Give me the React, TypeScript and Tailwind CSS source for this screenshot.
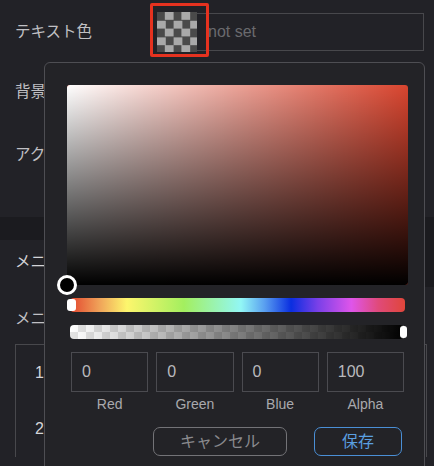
const font = "font-['Liberation_Sans','Noto_Sans_CJK_JP',sans-serif]";

const channels = [
  { label: "Red", value: "0" },
  { label: "Green", value: "0" },
  { label: "Blue", value: "0" },
  { label: "Alpha", value: "100" },
];

function ColorPopover() {
  return (
    <div className="absolute left-[44px] top-[62px] w-[381px] h-[420px] rounded-[6px] border border-[#4e4e53] bg-[#232327] pl-[22px] pr-[16px] pt-[22px]">
      {/* Saturation / value area */}
      <div className="relative h-[200px] rounded-[3px] bg-[#d9452f]">
        <div className="absolute inset-0 rounded-[3px] bg-[linear-gradient(to_right,#ffffff,rgba(255,255,255,0))]" />
        <div className="absolute inset-0 rounded-[3px] bg-[linear-gradient(to_top,#000000,rgba(0,0,0,0))]" />
        <div className="absolute left-[-10px] bottom-[-10px] w-[20px] h-[20px] rounded-full border-[3px] border-white bg-black" />
      </div>

      {/* Hue slider */}
      <div className="relative mt-[13px] mx-[3px] h-[14px] rounded-[4px] bg-[linear-gradient(to_right,#e3462f_0%,#f0a55a_9%,#fdf66d_17%,#a3ef5f_34%,#92f7f5_51%,#5aa0f0_58%,#0a2ee0_66%,#7a40e8_74%,#df55ea_84%,#e04a7a_92%,#e0463a_100%)]">
        <div className="absolute left-[-3px] top-[1px] w-[9px] h-[12px] rounded-[3px] bg-white" />
      </div>

      {/* Alpha slider */}
      <div className="relative mt-[13px] mx-[3px] h-[14px] rounded-[4px] bg-[repeating-conic-gradient(#e4e4e4_0_25%,#ffffff_0_50%)] bg-[length:16px_14px]">
        <div className="absolute inset-0 rounded-[4px] bg-[linear-gradient(to_right,rgba(0,0,0,0),#000000)]" />
        <div className="absolute right-[-2px] top-[1px] w-[7px] h-[12px] rounded-[3px] bg-white" />
      </div>

      {/* Channel inputs */}
      <div className="mt-[13px] px-[4px] grid grid-cols-4 gap-x-[8px]">
        {channels.map((c) => (
          <div key={c.label} className="flex flex-col">
            <div className="h-[40px] border border-[#4b4b50] flex items-center pl-[10px] text-[16px] text-[#b9b9bd]">
              {c.value}
            </div>
            <div className="mt-[3px] h-[18px] leading-[18px] text-center text-[14px] text-[#a9a9ad]">
              {c.label}
            </div>
          </div>
        ))}
      </div>

      {/* Actions */}
      <div className="mt-[14px] mr-[6px] flex justify-end gap-[27px]">
        <button className="w-[134px] h-[29px] rounded-[7px] border-[1.5px] border-[#737377] text-[16px] text-[#8a8a8e]">
          キャンセル
        </button>
        <button className="w-[88px] h-[29px] rounded-[7px] border-[1.5px] border-[#4a8fd6] text-[16px] text-[#5a9fe0]">
          保存
        </button>
      </div>
    </div>
  );
}

export default function App() {
  return (
    <div className={`relative w-[434px] h-[466px] overflow-hidden bg-[#222227] ${font}`}>
      <div className="flex flex-col">
        {/* テキスト色 row */}
        <div className="h-[64px] flex items-center pl-[15px]">
          <span className="w-[142px] text-[15.5px] text-[#c0c0c4]">テキスト色</span>
          <div className="relative flex items-center">
            <div className="w-[40px] h-[40px] bg-[repeating-conic-gradient(#a9a9a9_0_25%,#4a4a4a_0_50%)] bg-[length:16.6px_16.6px]" />
            <div className="w-[227px] h-[38px] border border-l-0 border-[#48484c] flex items-center pl-[11px] text-[16px] text-[#6a6a6e]">
              not set
            </div>
            <div className="absolute left-[-7px] top-[-9px] w-[59px] h-[54px] rounded-[2px] border-[3px] border-[#e5321f]" />
          </div>
        </div>

        <div className="h-[56px] flex items-center pl-[15px] text-[15.5px] text-[#c0c0c4]">背景色</div>
        <div className="h-[70px] flex items-center pl-[15px] text-[15.5px] text-[#c0c0c4]">アクセント色</div>

        <div className="h-[27px]" />
        <div className="flex">
          <div className="flex-1 h-[23px] bg-[#1b1b1f]" />
          <div className="w-[9px] h-[70px] bg-[#1b1b1f]" />
        </div>

        <div className="-mt-[47px] h-[44px] flex items-center pl-[15px] text-[15.5px] text-[#d4d4d8]">メニュー</div>
        <div className="mt-[10px] h-[50px] flex items-center pl-[15px] text-[15.5px] text-[#c0c0c4]">メニュー項目</div>

        <div className="ml-[15px] w-[412px] border border-b-0 border-[#48484c]">
          <div className="h-[56px] flex items-center pl-[19px] text-[16px] text-[#d4d4d8]">1</div>
          <div className="h-[56px] flex items-center pl-[19px] text-[16px] text-[#d4d4d8]">2</div>
        </div>
      </div>

      <ColorPopover />
    </div>
  );
}
